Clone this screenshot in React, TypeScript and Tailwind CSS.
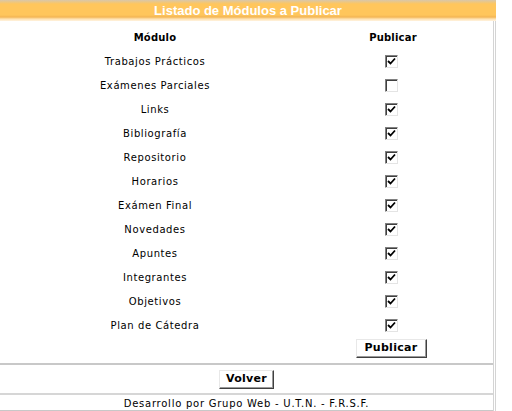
/**
 * App — Listado de módulos a publicar.
 */

const modulos: { nombre: string; publicado: boolean }[] = [
  { nombre: 'Trabajos Prácticos', publicado: true },
  { nombre: 'Exámenes Parciales', publicado: false },
  { nombre: 'Links', publicado: true },
  { nombre: 'Bibliografía', publicado: true },
  { nombre: 'Repositorio', publicado: true },
  { nombre: 'Horarios', publicado: true },
  { nombre: 'Exámen Final', publicado: true },
  { nombre: 'Novedades', publicado: true },
  { nombre: 'Apuntes', publicado: true },
  { nombre: 'Integrantes', publicado: true },
  { nombre: 'Objetivos', publicado: true },
  { nombre: 'Plan de Cátedra', publicado: true },
];

/** Classic sunken checkbox. */
function Check({ checked }: { checked: boolean }) {
  return (
    <div className="flex h-[13px] w-[13px] items-center justify-center border border-t-[#808080] border-l-[#808080] border-b-[#e4e4e4] border-r-[#e4e4e4] bg-white shadow-[inset_1px_1px_0_#404040]">
      {checked && (
        <svg width="9" height="9" viewBox="0 0 9 9">
          <path d="M1 4 L3.5 6.5 L8 1.5" fill="none" stroke="#000" strokeWidth={1.8} />
        </svg>
      )}
    </div>
  );
}

function Boton({ label, width }: { label: string; width: string }) {
  return (
    <button
      type="button"
      className={`${width} h-[19px] border border-t-[#e8e8e8] border-l-[#e8e8e8] border-b-[#404040] border-r-[#404040] bg-white text-[11px] font-bold tracking-[0.3px] text-black shadow-[inset_-1px_-1px_0_#9a9a9a]`}
    >
      {label}
    </button>
  );
}

export default function App() {
  return (
    <div className="min-h-[411px] w-[512px] bg-white font-['DejaVu_Sans',Verdana,sans-serif] text-[10px] text-black">
      <div className="w-[496px]">
        {/* Título */}
        <div className="flex h-[21px] items-center justify-center bg-[linear-gradient(#d9c7a9_0px,#ffc65c_4px,#ffc65c_15px,#f3b656_17px,#ffe2b0_19px,#fff3e0_21px)] font-['Liberation_Sans',Arial,sans-serif] text-[13px] font-bold text-white">
          Listado de Módulos a Publicar
        </div>

        <div className="border-r-[3px] border-double border-r-[#d4d4d4]">
          <div className="pt-[4px]">
            <div className="grid h-6 grid-cols-[310px_1fr] items-center font-bold tracking-[0.2px]">
              <div className="text-center">Módulo</div>
              <div className="pr-[17px] text-center">Publicar</div>
            </div>
            {modulos.map((m) => (
              <div key={m.nombre} className="grid h-6 grid-cols-[310px_1fr] items-center">
                <div className="text-center tracking-[0.6px]">{m.nombre}</div>
                <div className="flex justify-center pr-[20px]">
                  <Check checked={m.publicado} />
                </div>
              </div>
            ))}
            <div className="grid h-[26px] grid-cols-[310px_1fr] items-start pt-[2px]">
              <div />
              <div className="flex justify-center pr-[21px]">
                <Boton label="Publicar" width="w-[71px]" />
              </div>
            </div>
          </div>

          <div className="h-[2px] bg-[#c8c8c8]" />
          <div className="flex h-[28px] items-center justify-center">
            <Boton label="Volver" width="w-[55px]" />
          </div>
          <div className="h-[2px] bg-[#d6d6d6]" />
          <div className="flex h-[15px] items-center justify-center pt-[1px] tracking-[0.75px]">
            Desarrollo por Grupo Web - U.T.N. - F.R.S.F.
          </div>
          <div className="h-[2px] bg-[#c8c8c8]" />
        </div>
      </div>
    </div>
  );
}
